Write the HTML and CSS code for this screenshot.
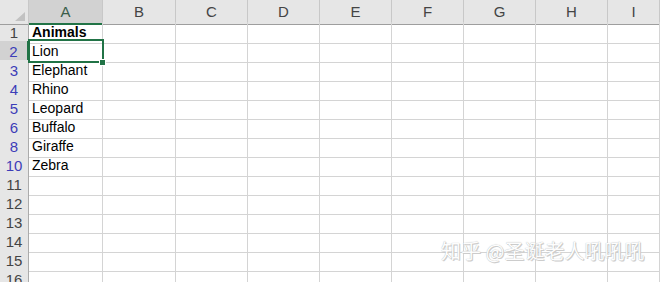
FILE: index.html
```html
<!DOCTYPE html>
<html>
  <head>
    <meta charset="utf-8">
    <title>Book1 - Excel</title>
    <link rel="stylesheet" href="styles.css">
  </head>
  <body>
    <main class="sheet">
      <div class="row head">
        <span class="corner"></span>
        <span class="col active">A</span><span class="col">B</span><span class="col">C</span><span class="col">D</span><span class="col">E</span><span class="col">F</span><span class="col">G</span><span class="col">H</span><span class="col">I</span>
      </div>
      <div class="row">
        <span class="num">1</span>
        <span class="cell bold">Animals</span><span class="cell"></span><span class="cell"></span><span class="cell"></span><span class="cell"></span><span class="cell"></span><span class="cell"></span><span class="cell"></span><span class="cell"></span>
      </div>
      <div class="row">
        <span class="num filtered active">2</span>
        <span class="cell selected">Lion</span><span class="cell"></span><span class="cell"></span><span class="cell"></span><span class="cell"></span><span class="cell"></span><span class="cell"></span><span class="cell"></span><span class="cell"></span>
      </div>
      <div class="row">
        <span class="num filtered">3</span>
        <span class="cell">Elephant</span><span class="cell"></span><span class="cell"></span><span class="cell"></span><span class="cell"></span><span class="cell"></span><span class="cell"></span><span class="cell"></span><span class="cell"></span>
      </div>
      <div class="row">
        <span class="num filtered">4</span>
        <span class="cell">Rhino</span><span class="cell"></span><span class="cell"></span><span class="cell"></span><span class="cell"></span><span class="cell"></span><span class="cell"></span><span class="cell"></span><span class="cell"></span>
      </div>
      <div class="row">
        <span class="num filtered">5</span>
        <span class="cell">Leopard</span><span class="cell"></span><span class="cell"></span><span class="cell"></span><span class="cell"></span><span class="cell"></span><span class="cell"></span><span class="cell"></span><span class="cell"></span>
      </div>
      <div class="row">
        <span class="num filtered">6</span>
        <span class="cell">Buffalo</span><span class="cell"></span><span class="cell"></span><span class="cell"></span><span class="cell"></span><span class="cell"></span><span class="cell"></span><span class="cell"></span><span class="cell"></span>
      </div>
      <div class="row">
        <span class="num filtered">8</span>
        <span class="cell">Giraffe</span><span class="cell"></span><span class="cell"></span><span class="cell"></span><span class="cell"></span><span class="cell"></span><span class="cell"></span><span class="cell"></span><span class="cell"></span>
      </div>
      <div class="row">
        <span class="num filtered">10</span>
        <span class="cell">Zebra</span><span class="cell"></span><span class="cell"></span><span class="cell"></span><span class="cell"></span><span class="cell"></span><span class="cell"></span><span class="cell"></span><span class="cell"></span>
      </div>
      <div class="row">
        <span class="num">11</span>
        <span class="cell"></span><span class="cell"></span><span class="cell"></span><span class="cell"></span><span class="cell"></span><span class="cell"></span><span class="cell"></span><span class="cell"></span><span class="cell"></span>
      </div>
      <div class="row">
        <span class="num">12</span>
        <span class="cell"></span><span class="cell"></span><span class="cell"></span><span class="cell"></span><span class="cell"></span><span class="cell"></span><span class="cell"></span><span class="cell"></span><span class="cell"></span>
      </div>
      <div class="row">
        <span class="num">13</span>
        <span class="cell"></span><span class="cell"></span><span class="cell"></span><span class="cell"></span><span class="cell"></span><span class="cell"></span><span class="cell"></span><span class="cell"></span><span class="cell"></span>
      </div>
      <div class="row">
        <span class="num">14</span>
        <span class="cell"></span><span class="cell"></span><span class="cell"></span><span class="cell"></span><span class="cell"></span><span class="cell"></span><span class="cell"></span><span class="cell"></span><span class="cell"></span>
      </div>
      <div class="row">
        <span class="num">15</span>
        <span class="cell"></span><span class="cell"></span><span class="cell"></span><span class="cell"></span><span class="cell"></span><span class="cell"></span><span class="cell"></span><span class="cell"></span><span class="cell"></span>
      </div>
      <div class="row">
        <span class="num">16</span>
        <span class="cell"></span><span class="cell"></span><span class="cell"></span><span class="cell"></span><span class="cell"></span><span class="cell"></span><span class="cell"></span><span class="cell"></span><span class="cell"></span>
      </div>
      <span class="watermark">知乎 @圣诞老人吼吼吼</span>
    </main>
  </body>
</html>
```

FILE: styles.css
```css
body, html {
  margin: 0;
  width: 100%;
  height: 100%;
  overflow: hidden;
  background: #fff;
}
.sheet {
  position: relative;
  font-family: "Liberation Sans", Arial, sans-serif;
  font-size: 14px;
  color: #000;
}
.row {
  display: grid;
  grid-template-columns: 29px 74px 73px repeat(6, 72px) 1fr;
  height: 19px;
}
.row.head {
  height: 22px;
}
.row > span {
  box-sizing: border-box;
  border-right: 1px solid #d4d4d4;
  border-bottom: 1px solid #d4d4d4;
  white-space: nowrap;
  line-height: 21px;
}
.corner {
  position: relative;
  background: #e6e6e6;
}
.corner::after {
  content: "";
  position: absolute;
  right: 3px;
  bottom: 3px;
  border-left: 10px solid transparent;
  border-bottom: 9px solid #c2c2c2;
}
.head > span {
  background: #e6e6e6;
  border-right-color: #c8c8c8;
  border-bottom-color: #9e9e9e;
}
.row > .col {
  text-align: center;
  color: #444;
  line-height: 23px;
  font-size: 15px;
}
.head .col.active {
  background: #d2d2d2;
  color: #3a5e4a;
  border-bottom: 2px solid #217346;
}
.num {
  background: #e6e6e6;
  text-align: center;
  color: #444;
  font-size: 15px;
  border-right-color: #ababab !important;
}
.num.filtered {
  color: #3d3db8;
}
.num.active {
  background: #d2d2d2;
  border-right: 2px solid #217346 !important;
}
.cell {
  padding-left: 3px;
}
.bold {
  font-weight: 700;
}
.selected {
  position: relative;
}
.selected::before {
  content: "";
  position: absolute;
  left: -1px;
  top: -2px;
  right: -2px;
  bottom: -1px;
  border: 2px solid #217346;
}
.selected::after {
  content: "";
  position: absolute;
  right: -4px;
  bottom: -4px;
  width: 5px;
  height: 5px;
  background: #217346;
  border: 1px solid #fff;
}
.watermark {
  position: absolute;
  left: 441px;
  top: 239px;
  font-family: "Noto Sans CJK SC", sans-serif;
  font-size: 20px;
  line-height: 24px;
  color: #fdfdfd;
  text-shadow: 0 0 1px #a8a8a8, 1px 1px 0 #d0d0d0;
  white-space: nowrap;
}
```
